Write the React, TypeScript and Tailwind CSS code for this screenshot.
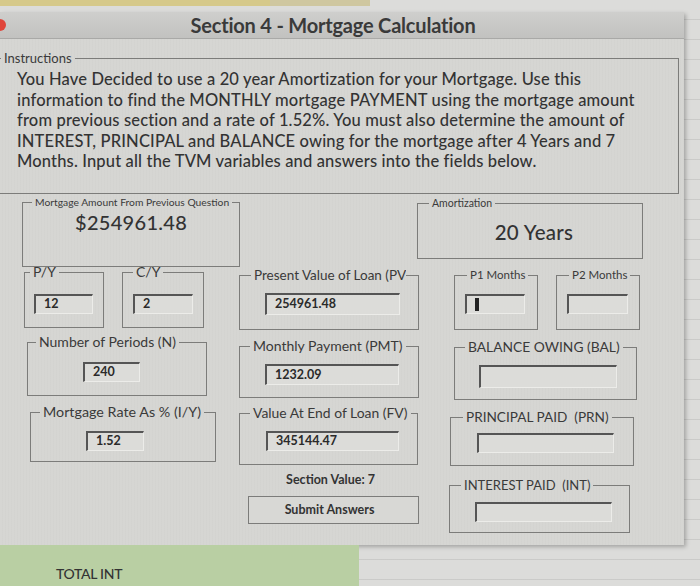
import React from "react";

const font = { fontFamily: "Lato, 'Noto Sans', sans-serif" };

function Group({
  label,
  className,
  inner,
  legendClass = "text-[14px] ml-[10px]",
  children,
}: {
  label: string;
  className?: string;
  inner?: string;
  legendClass?: string;
  children?: React.ReactNode;
}) {
  return (
    <fieldset className={`border border-[#7c7c7a] shrink-0 ${className ?? ""}`}>
      <legend className={`px-[3px] text-[#3a3a3a] leading-[14px] whitespace-pre ${legendClass}`}>{label}</legend>
      <div className={inner}>{children}</div>
    </fieldset>
  );
}

function Field({ value, className, cursor }: { value?: string; className?: string; cursor?: boolean }) {
  return (
    <div
      className={`h-[20px] bg-[#dcdcd9] border-t-[2px] border-l-[2px] border-t-[#555] border-l-[#555] border-b border-r border-b-[#ecece9] border-r-[#ecece9] flex items-center pl-[8px] text-[12.5px] font-bold text-[#2a2a2a] ${className ?? ""}`}
    >
      {cursor ? <span className="w-[4px] h-[13px] bg-[#222]" /> : value}
    </div>
  );
}

export default function App() {
  return (
    <div
      className="w-[700px] h-[586px] overflow-hidden flex flex-col bg-[#dcdcda] bg-[repeating-linear-gradient(180deg,#dcdcda_0px,#dcdcda_19px,#b9b9b7_20px)]"
      style={font}
    >
      {/* spreadsheet strip behind */}
      <div className="h-[12px] flex shrink-0">
        <div className="w-[270px] h-[6px] bg-[#d6c98a]" />
        <div className="w-[100px] h-[6px] bg-[#cfc7a0]" />
      </div>

      <div className="flex shrink-0">
        {/* window */}
        <div className="w-[684px] h-[533px] bg-[#d5d5d2] bg-[repeating-linear-gradient(90deg,#d6d6d3_0px,#d6d6d3_2px,#d1d1ce_3px)] shadow-[2px_2px_4px_rgba(0,0,0,0.25)] flex flex-col text-[#333]">
          <div className="h-[27px] shrink-0 bg-[linear-gradient(180deg,#cfcfcd,#c2c2c0)] border-b border-[#a9a9a7] flex items-center relative">
            <span className="absolute left-[-6px] top-[7px] w-[12px] h-[12px] rounded-full bg-[#e0453a]" />
            <h1 className="flex-1 text-center pr-[18px] text-[20px] font-bold text-[#3a3a3a] tracking-[-0.2px]">
              Section 4 - Mortgage Calculation
            </h1>
          </div>

          <div className="pl-[8px] pr-[5px] pt-[12px]">
            <Group label="Instructions" className="h-[143px] -ml-[10px]" inner="pl-[18px] pt-[4px]" legendClass="text-[13px] ml-[2px]">
              <p className="text-[16.5px] leading-[20.5px] font-medium text-[#333] tracking-[0.15px] whitespace-nowrap">
                You Have Decided to use a 20 year Amortization for your Mortgage. Use this
                <br />
                information to find the MONTHLY mortgage PAYMENT using the mortgage amount
                <br />
                from previous section and a rate of 1.52%. You must also determine the amount of
                <br />
                INTEREST, PRINCIPAL and BALANCE owing for the mortgage after 4 Years and 7
                <br />
                Months. Input all the TVM variables and answers into the fields below.
              </p>
            </Group>
          </div>

          {/* row 1 */}
          <div className="flex mt-[1px] items-start">
            <Group label="Mortgage Amount From Previous Question" className="ml-[22px] w-[218px] h-[72px]" legendClass="text-[10.3px] ml-[9px]">
              <div className="pl-[52px] -mt-[2px] text-[20px] font-medium text-[#333] tracking-[0.3px]">$254961.48</div>
            </Group>
            <Group label="Amortization" className="ml-[177px] mt-[1px] w-[226px] h-[63px]" legendClass="text-[10.5px] ml-[11px]">
              <div className="text-center pl-[8px] pt-[7px] text-[20.5px] font-medium text-[#333] tracking-[0.3px]">20 Years</div>
            </Group>
          </div>

          {/* row 2 */}
          <div className="flex -mt-[2px] items-start">
            <Group label="P/Y" className="ml-[24px] w-[80px] h-[63px]" inner="pl-[9px] pt-[15px]" legendClass="text-[14px] ml-[5px]">
              <Field value="12" className="w-[59px]" />
            </Group>
            <Group label="C/Y" className="ml-[18px] w-[82px] h-[63px]" inner="pl-[10px] pt-[15px]" legendClass="text-[14px] ml-[10px]">
              <Field value="2" className="w-[60px]" />
            </Group>
            <Group label="Present Value of Loan (PV" className="ml-[35px] mt-[3px] w-[180px] h-[62px]" inner="pl-[25px] pt-[11px]" legendClass="text-[13.5px] ml-[11px] pr-0 overflow-hidden max-w-[162px]">
              <Field value="254961.48" className="w-[135px] h-[22px]" />
            </Group>
            <Group label="P1 Months" className="ml-[35px] mt-[3px] w-[84px] h-[62px]" inner="pl-[10px] pt-[12px]" legendClass="text-[11.5px] ml-[12px]">
              <Field cursor className="w-[60px]" />
            </Group>
            <Group label="P2 Months" className="ml-[18px] mt-[3px] w-[84px] h-[62px]" inner="pl-[10px] pt-[12px]" legendClass="text-[11.5px] ml-[12px]">
              <Field className="w-[61px]" />
            </Group>
          </div>

          {/* row 3 */}
          <div className="flex mt-[5px] items-start">
            <Group label="Number of Periods (N)" className="ml-[27px] w-[180px] h-[61px]" inner="pl-[55px] pt-[13px]" legendClass="text-[14px] ml-[8px]">
              <Field value="240" className="w-[57px]" />
            </Group>
            <Group label="Monthly Payment (PMT)" className="ml-[32px] mt-[4px] w-[180px] h-[59px]" inner="pl-[25px] pt-[11px]" legendClass="text-[14px] ml-[10px]">
              <Field value="1232.09" className="w-[134px] h-[21px]" />
            </Group>
            <Group label="BALANCE OWING (BAL)" className="ml-[35px] mt-[5px] w-[183px] h-[60px]" inner="pl-[24px] pt-[11px]" legendClass="text-[13.8px] ml-[10px]">
              <Field className="w-[138px] h-[23px]" />
            </Group>
          </div>

          {/* row 4 */}
          <div className="flex mt-[5px] items-start">
            <Group label="Mortgage Rate As % (I/Y)" className="ml-[30px] w-[186px] h-[57px]" inner="pl-[55px] pt-[12px]" legendClass="text-[14.3px] ml-[9px]">
              <Field value="1.52" className="w-[58px]" />
            </Group>
            <Group label="Value At End of Loan (FV)" className="ml-[23px] mt-[1px] w-[179px] h-[59px]" inner="pl-[26px] pt-[11px]" legendClass="text-[13.9px] ml-[10px]">
              <Field value="345144.47" className="w-[133px]" />
            </Group>
            <Group label="PRINCIPAL PAID  (PRN)" className="ml-[32px] mt-[5px] w-[184px] h-[56px]" inner="pl-[26px] pt-[9px]" legendClass="text-[13.6px] ml-[12px]">
              <Field className="w-[137px]" />
            </Group>
          </div>

          {/* row 5 */}
          <div className="flex mt-[6px] items-start">
            <div className="ml-[248px] w-[171px] flex flex-col items-center">
              <div className="h-[16px] leading-[16px] text-[12.5px] font-bold text-[#333] pr-[6px]">Section Value: 7</div>
              <button className="mt-[8px] w-[171px] h-[28px] border border-[#7c7c7a] bg-[#d8d8d5] text-[12.5px] font-bold text-[#333] pr-[8px]">
                Submit Answers
              </button>
            </div>
            <Group label="INTEREST PAID  (INT)" className="ml-[30px] mt-[6px] w-[181px] h-[55px]" inner="pl-[25px] pt-[10px]" legendClass="text-[13px] ml-[11px]">
              <Field className="w-[137px]" />
            </Group>
          </div>
        </div>
      </div>

      {/* spreadsheet bottom */}
      <div className="flex-1 flex">
        <div className="w-[359px] bg-[#b9cfa3] pl-[56px] pt-[18px] text-[14px] font-medium text-[#333] tracking-[-0.3px]">TOTAL INT</div>
      </div>
    </div>
  );
}
